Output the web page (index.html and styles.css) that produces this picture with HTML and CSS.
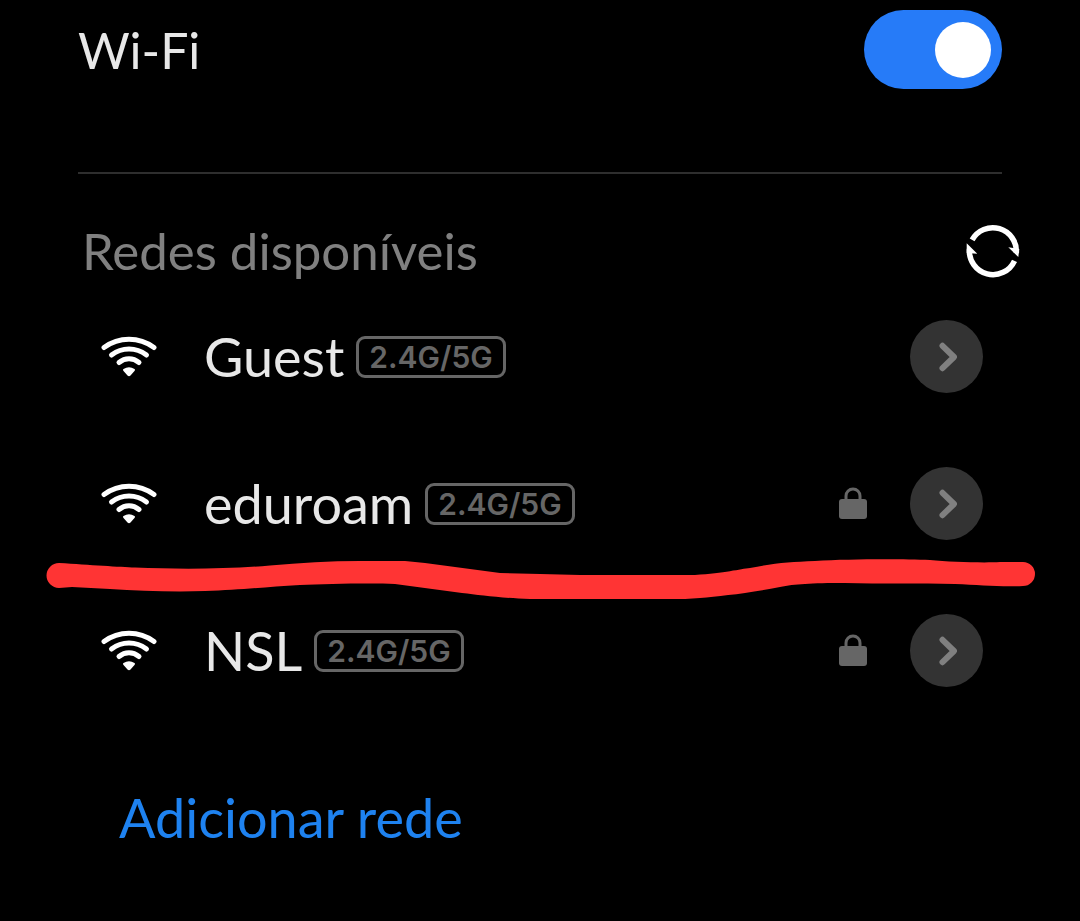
FILE: index.html
```html
<!DOCTYPE html>
<html lang="pt-BR">
<head>
<meta charset="utf-8">
<meta name="viewport" content="width=device-width, initial-scale=1">
<title>Wi-Fi</title>
<link rel="stylesheet" href="styles.css">
</head>
<body>
<svg class="sprite" aria-hidden="true">
  <symbol id="wifi" viewBox="0 0 56 42">
    <g fill="none" stroke="currentColor" stroke-width="5" stroke-linecap="round">
      <path d="M3 11.500C18 .5 38 .5 53 11.500"/>
      <path d="M10.500 19C21 11 35 11 45.500 19"/>
      <path d="M18 26.500C24 21.500 32 21.500 38 26.500"/>
    </g>
    <path fill="currentColor" d="M22.500 33Q28 29.500 33.500 33Q34.500 33.800 33.700 34.700L29.500 39.600Q28 41 26.500 39.600L22.300 34.700Q21.500 33.800 22.500 33Z"/>
  </symbol>
  <symbol id="lock" viewBox="0 0 28 34">
    <path d="M7 14V9a7 7 0 0 1 14 0v5" fill="none" stroke="currentColor" stroke-width="3"/>
    <rect y="12" width="28" height="20" rx="3" fill="currentColor"/>
  </symbol>
  <symbol id="chevron" viewBox="0 0 20 30">
    <path d="M5.500 3.800L17 15L5.500 26.200" fill="none" stroke="currentColor" stroke-width="6" stroke-linecap="round" stroke-linejoin="round"/>
  </symbol>
</svg>
<main class="page">
  <header class="power">
    <label class="title" for="wifi-switch">Wi-Fi</label>
    <input class="switch" id="wifi-switch" type="checkbox" role="switch" checked>
  </header>
  <section class="available">
    <div class="section-head">
      <h2 class="section-title">Redes disponíveis</h2>
      <button class="refresh" type="button" aria-label="Atualizar">
        <svg viewBox="0 0 54 54" width="54" height="54" aria-hidden="true">
          <g fill="none" stroke="currentColor" stroke-width="5.500">
            <path d="M6.100 15.900A23.600 23.600 0 0 1 50.300 29"/>
            <path d="M48.500 36.800A23.600 23.600 0 0 1 3.500 25"/>
          </g>
          <path fill="currentColor" d="M42.300 23.300L53.300 25L52.300 33ZM.7 19.300L11.300 29.700L.7 29Z"/>
        </svg>
      </button>
    </div>
    <ul class="networks">
      <li class="network">
        <svg class="signal" aria-hidden="true"><use href="#wifi"/></svg>
        <span class="name">Guest</span>
        <span class="band">2.4G/5G</span>
        <button class="details" type="button" aria-label="Detalhes de Guest"><svg class="chevron" aria-hidden="true"><use href="#chevron"/></svg></button>
      </li>
      <li class="network">
        <svg class="signal" aria-hidden="true"><use href="#wifi"/></svg>
        <span class="name">eduroam</span>
        <span class="band">2.4G/5G</span>
        <svg class="lock" aria-hidden="true"><use href="#lock"/></svg>
        <button class="details" type="button" aria-label="Detalhes de eduroam"><svg class="chevron" aria-hidden="true"><use href="#chevron"/></svg></button>
        <svg class="marker" viewBox="0 0 1080 50" preserveAspectRatio="none" aria-hidden="true">
          <path fill="#ff3434" d="M59 8C90 10 120 12 135 12.500C180 14.500 230 14 270 10.500C300 8 330 6 360 6L405 6L425 8L500 18L540 19L580 20L695 20C725 18 740 14 750 13C775 8 790 7 815 6C850 4 900 4 930 5C950 7 985 8 1000 7L1023 7A12 12 0 0 1 1023 31C1000 32 980 30 955 29C920 28 880 29 845 28C810 28 795 29 780 32C745 39 720 41 700 43L685 44L530 44C500 43 480 40 462 38L395 29C370 28 325 29 300 30C265 32 240 35 205 36C175 37 140 36 110 34L72 32L59 33A12.500 12.500 0 0 1 59 8Z"/>
        </svg>
      </li>
      <li class="network">
        <svg class="signal" aria-hidden="true"><use href="#wifi"/></svg>
        <span class="name">NSL</span>
        <span class="band">2.4G/5G</span>
        <svg class="lock" aria-hidden="true"><use href="#lock"/></svg>
        <button class="details" type="button" aria-label="Detalhes de NSL"><svg class="chevron" aria-hidden="true"><use href="#chevron"/></svg></button>
      </li>
    </ul>
  </section>
  <a class="add" href="#adicionar">Adicionar rede</a>
</main>
</body>
</html>
```
FILE: styles.css
```css
* {
  box-sizing: border-box;
}

body {
  margin: 0;
  background: #000;
  color: #e8e8e8;
  font-family: Lato, "Noto Sans", sans-serif;
  font-size: 50px;
  line-height: 64px;
}

button {
  padding: 0;
  border: 0;
  background: none;
  font: inherit;
}

.sprite {
  position: absolute;
  width: 0;
  height: 0;
}

.power {
  display: flex;
  align-items: center;
  justify-content: space-between;
  margin: 0 78px;
  padding: 10px 0 83px;
  border-bottom: 2px solid #2e2e2e;
}

.switch {
  appearance: none;
  display: flex;
  align-items: center;
  justify-content: flex-end;
  width: 138px;
  height: 79px;
  margin: 0;
  padding: 0 11px;
  border-radius: 40px;
  background: #267bf8;
}

.switch::before {
  content: "";
  width: 56px;
  height: 56px;
  border-radius: 50%;
  background: #fff;
}

.switch:not(:checked) {
  justify-content: flex-start;
  background: #333;
}

.section-head {
  display: flex;
  align-items: center;
  justify-content: space-between;
  padding: 45px 60px 0 82px;
}

.section-title {
  margin: 0;
  color: #808080;
  font-size: 51px;
  font-weight: 400;
}

.refresh {
  display: flex;
  color: #fff;
}

.networks {
  margin: 0;
  padding: 0;
  list-style: none;
}

.network {
  position: relative;
  display: flex;
  align-items: center;
  height: 147px;
  padding: 0 97px 0 101px;
}

.signal {
  width: 56px;
  height: 42px;
  margin-right: 47px;
  color: #fff;
}

.name {
  font-size: 54px;
}

.band {
  margin-left: 12px;
  padding: 0 10px;
  border: 3px solid #666;
  border-radius: 9px;
  color: #666;
  font-family: Inter, "Noto Sans", sans-serif;
  font-size: 30px;
  font-weight: 600;
  line-height: 36px;
}

.lock {
  width: 28px;
  height: 34px;
  margin-left: auto;
  color: #666;
}

.details {
  display: flex;
  align-items: center;
  justify-content: center;
  width: 73px;
  height: 73px;
  margin-left: auto;
  border-radius: 50%;
  background: #333;
  color: #808080;
}

.lock + .details {
  margin-left: 43px;
}

.chevron {
  width: 20px;
  height: 30px;
}

.marker {
  position: absolute;
  top: 125px;
  left: 0;
  z-index: 1;
  width: 100%;
  height: 50px;
  pointer-events: none;
}

.add {
  display: block;
  width: fit-content;
  margin: 62px 0 64px 119px;
  color: #1e82f0;
  font-size: 54px;
  text-decoration: none;
}
```
